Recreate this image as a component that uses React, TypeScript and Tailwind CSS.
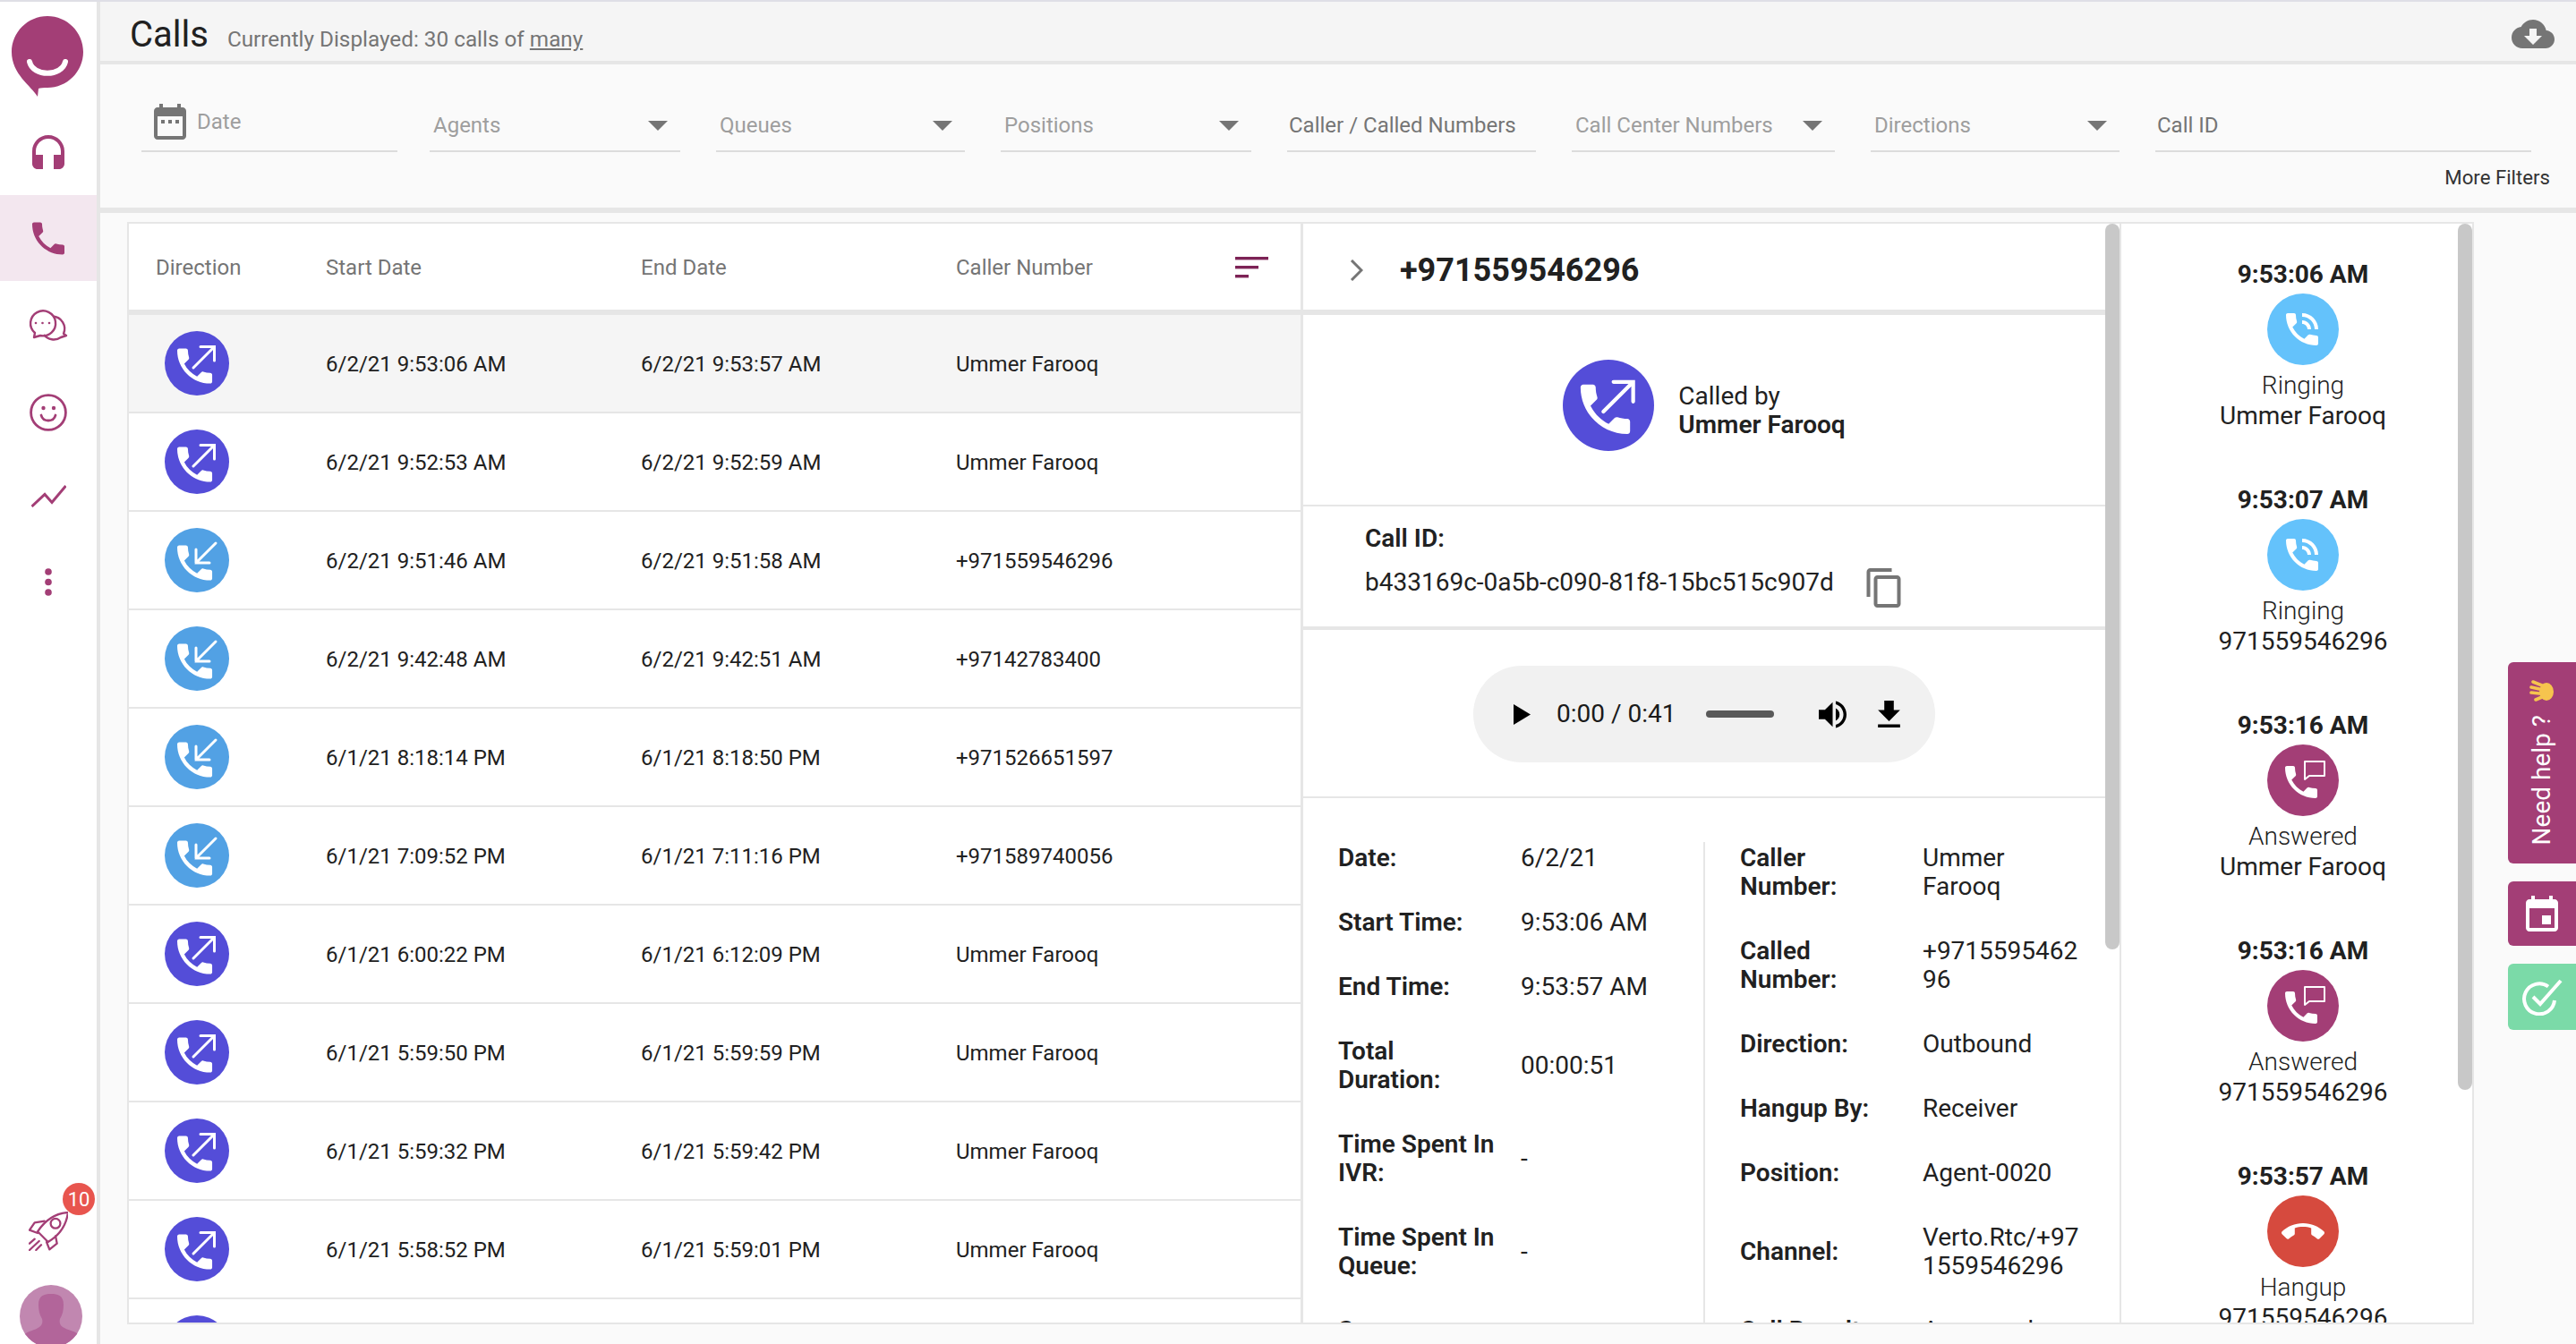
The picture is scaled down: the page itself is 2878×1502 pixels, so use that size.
import { Fragment } from "react";

const PHONE =
  "M6.62 10.79c1.44 2.83 3.76 5.14 6.59 6.59l2.2-2.2c.27-.27.67-.36 1.02-.24 1.12.37 2.33.57 3.57.57.55 0 1 .45 1 1V20c0 .55-.45 1-1 1-9.39 0-17-7.61-17-17 0-.55.45-1 1-1h3.5c.55 0 1 .45 1 1 0 1.25.2 2.45.57 3.57.11.35.03.74-.25 1.02l-2.2 2.2z";

const rows = [
  { out: true, start: "6/2/21 9:53:06 AM", end: "6/2/21 9:53:57 AM", caller: "Ummer Farooq" },
  { out: true, start: "6/2/21 9:52:53 AM", end: "6/2/21 9:52:59 AM", caller: "Ummer Farooq" },
  { out: false, start: "6/2/21 9:51:46 AM", end: "6/2/21 9:51:58 AM", caller: "+971559546296" },
  { out: false, start: "6/2/21 9:42:48 AM", end: "6/2/21 9:42:51 AM", caller: "+97142783400" },
  { out: false, start: "6/1/21 8:18:14 PM", end: "6/1/21 8:18:50 PM", caller: "+971526651597" },
  { out: false, start: "6/1/21 7:09:52 PM", end: "6/1/21 7:11:16 PM", caller: "+971589740056" },
  { out: true, start: "6/1/21 6:00:22 PM", end: "6/1/21 6:12:09 PM", caller: "Ummer Farooq" },
  { out: true, start: "6/1/21 5:59:50 PM", end: "6/1/21 5:59:59 PM", caller: "Ummer Farooq" },
  { out: true, start: "6/1/21 5:59:32 PM", end: "6/1/21 5:59:42 PM", caller: "Ummer Farooq" },
  { out: true, start: "6/1/21 5:58:52 PM", end: "6/1/21 5:59:01 PM", caller: "Ummer Farooq" },
  // only the top of this row's icon shows above the fold
  { out: true, start: "", end: "", caller: "" },
];

const leftInfo = [
  ["Date:", "6/2/21"],
  ["Start Time:", "9:53:06 AM"],
  ["End Time:", "9:53:57 AM"],
  ["Total Duration:", "00:00:51"],
  ["Time Spent In IVR:", "-"],
  ["Time Spent In Queue:", "-"],
  ["Source:", "-"],
];

const rightInfo = [
  ["Caller Number:", "Ummer Farooq"],
  ["Called Number:", "+971559546296"],
  ["Direction:", "Outbound"],
  ["Hangup By:", "Receiver"],
  ["Position:", "Agent-0020"],
  ["Channel:", "Verto.Rtc/+971559546296"],
  ["Call Result:", "Answered"],
];

const timeline = [
  { time: "9:53:06 AM", kind: "ring", label: "Ringing", who: "Ummer Farooq" },
  { time: "9:53:07 AM", kind: "ring", label: "Ringing", who: "971559546296" },
  { time: "9:53:16 AM", kind: "answer", label: "Answered", who: "Ummer Farooq" },
  { time: "9:53:16 AM", kind: "answer", label: "Answered", who: "971559546296" },
  { time: "9:53:57 AM", kind: "hangup", label: "Hangup", who: "971559546296" },
];

// circle with handset and direction arrow, drawn on a 72 unit box
function DirectionIcon({ out, size }: { out: boolean; size: string }) {
  return (
    <svg viewBox="0 0 72 72" className={`${size} shrink-0`}>
      <circle cx="36" cy="36" r="36" fill={out ? "#544dd8" : "#52a1e4"} />
      <path d={PHONE} fill="#fff" transform="translate(7.5 13) scale(2.17)" />
      {out ? (
        <path d="M32 41 L55 18 M40 17.5 H55.5 V33" fill="none" stroke="#fff" strokeWidth="3" strokeLinecap="round" />
      ) : (
        <path d="M57 17 L35 39 M35 24 V39 H50" fill="none" stroke="#fff" strokeWidth="3" strokeLinecap="round" />
      )}
    </svg>
  );
}

function TimelineIcon({ kind }: { kind: string }) {
  if (kind === "ring") {
    return (
      <svg viewBox="0 0 80 80" className="h-[80px] w-[80px]">
        <circle cx="40" cy="40" r="40" fill="#64c2fb" />
        <path
          transform="translate(15 16) scale(2)"
          fill="#fff"
          d="M20 15.5c-1.25 0-2.45-.2-3.57-.57-.35-.11-.74-.03-1.02.24l-2.2 2.2c-2.83-1.44-5.15-3.75-6.59-6.59l2.2-2.21c.28-.26.36-.65.25-1C8.7 6.45 8.5 5.25 8.5 4c0-.55-.45-1-1-1H4c-.55 0-1 .45-1 1 0 9.39 7.61 17 17 17 .55 0 1-.45 1-1v-3.5c0-.55-.45-1-1-1zM19 12h2c0-4.97-4.03-9-9-9v2c3.87 0 7 3.13 7 7zm-4 0h2c0-2.76-2.24-5-5-5v2c1.66 0 3 1.34 3 3z"
        />
      </svg>
    );
  }
  if (kind === "answer") {
    return (
      <svg viewBox="0 0 80 80" className="h-[80px] w-[80px]">
        <circle cx="40" cy="40" r="40" fill="#a33e76" />
        <path d={PHONE} fill="#fff" transform="translate(14 18) scale(2)" />
        <path d="M42 19 H64 V35 H47 L42 39 Z" fill="none" stroke="#fff" strokeWidth="2" strokeLinejoin="round" />
      </svg>
    );
  }
  return (
    <svg viewBox="0 0 80 80" className="h-[80px] w-[80px]">
      <circle cx="40" cy="40" r="40" fill="#d64a3e" />
      <path
        transform="translate(16 17) scale(2)"
        fill="#fff"
        d="M12 9c-1.6 0-3.15.25-4.6.72v3.1c0 .39-.23.74-.56.9-.98.49-1.87 1.12-2.66 1.85-.18.18-.43.28-.7.28-.28 0-.53-.11-.71-.29L.29 13.08c-.18-.17-.29-.42-.29-.7 0-.28.11-.53.29-.71C3.34 8.78 7.46 7 12 7s8.66 1.78 11.71 4.67c.18.18.29.43.29.71 0 .28-.11.53-.29.71l-2.48 2.48c-.18.18-.43.29-.71.29-.27 0-.52-.11-.7-.28-.79-.74-1.69-1.36-2.67-1.85-.33-.16-.56-.5-.56-.9v-3.1C15.15 9.25 13.6 9 12 9z"
      />
    </svg>
  );
}

function Sidebar() {
  return (
    <aside className="flex w-[112px] shrink-0 flex-col items-stretch border-r-4 border-[#e6e6e6] bg-white">
      <div className="flex h-[120px] shrink-0 justify-center pr-[2px] pt-[16px]">
        <svg viewBox="0 0 80 90" className="h-[90px] w-[80px]">
          <path
            fill="#a33e76"
            d="M40 0C62 0 80 18 80 40C80 62 62 80 40 80C36 80 32 80 30 81L29 90C22 78 0 65 0 40C0 18 18 0 40 0Z"
          />
          <path d="M20 51C24 68 56 68 60 51" fill="none" stroke="#fff" strokeWidth="6" strokeLinecap="round" />
        </svg>
      </div>
      <div className="flex h-[96px] items-center justify-center">
        <svg viewBox="3 1 18 19" className="h-[38px] w-[36px]" fill="#a33e76">
          <path d="M12 1c-4.97 0-9 4.03-9 9v7c0 1.66 1.34 3 3 3h3v-8H5v-2c0-3.87 3.13-7 7-7s7 3.13 7 7v2h-4v8h3c1.66 0 3-1.34 3-3v-7c0-4.97-4.03-9-9-9z" />
        </svg>
      </div>
      <div className="flex h-[96px] items-center justify-center bg-[#f3e7ef]">
        <svg viewBox="3 3 18 18" className="h-[37px] w-[36px]" fill="#a33e76">
          <path d={PHONE} />
        </svg>
      </div>
      <div className="flex h-[96px] items-center justify-center pt-[5px]">
        <svg viewBox="0 0 70 70" className="h-[70px] w-[70px]" fill="none" stroke="#a33e76" strokeWidth="2.4">
          <path d="M19 47L20 42A14 14 0 1 1 26 45Z" strokeLinejoin="round" />
          <path d="M40 23.5A14 14 0 0 1 52 43L55 45L49 47A14 14 0 0 1 30 44" strokeLinejoin="round" />
          <circle cx="21" cy="31" r="1.3" fill="#a33e76" stroke="none" />
          <circle cx="28.5" cy="31" r="1.3" fill="#a33e76" stroke="none" />
          <circle cx="36" cy="31" r="1.3" fill="#a33e76" stroke="none" />
        </svg>
      </div>
      <div className="flex h-[96px] items-center justify-center pt-[5px]">
        <svg viewBox="0 0 42 42" className="h-[42px] w-[42px]" fill="none" stroke="#a33e76" strokeWidth="2.8">
          <circle cx="21" cy="21" r="19.4" />
          <circle cx="15.5" cy="16" r="2.2" fill="#a33e76" stroke="none" />
          <circle cx="27" cy="16" r="2.2" fill="#a33e76" stroke="none" />
          <path d="M13 24C15 32 27 32 29 24" strokeLinecap="round" />
        </svg>
      </div>
      <div className="flex h-[96px] items-center justify-center">
        <svg viewBox="0 0 39 25" className="h-[25px] w-[39px]" fill="none" stroke="#a33e76" strokeWidth="3">
          <path d="M0.5 24L15 10.5L23 19.5L38.5 1" />
        </svg>
      </div>
      <div className="flex h-[96px] items-center justify-center">
        <svg viewBox="0 0 8 31" className="h-[31px] w-[8px]" fill="#a33e76">
          <circle cx="4" cy="4" r="3.8" />
          <circle cx="4" cy="15.5" r="3.8" />
          <circle cx="4" cy="27" r="3.8" />
        </svg>
      </div>
      <div className="relative mt-auto h-[44px] w-[44px] self-center">
        <svg viewBox="0 0 44 44" className="h-[44px] w-[44px]" fill="none" stroke="#a33e76" strokeWidth="2.3" strokeLinejoin="round" strokeLinecap="round">
          <path d="M44 1C28 2 17.7 10.7 10 22.3L21.7 34C33.3 27.3 42 16 44 1Z" />
          <path d="M17.7 10.7L6.7 12.3L1 20.7L10 24" />
          <path d="M30 27.3L31.7 35.7L23.3 42.3L20 34" />
          <circle cx="30" cy="13.3" r="5.4" />
          <path d="M1 35.7L6.7 30.7M1 43L11.7 33M8.3 43L14 37.3" />
        </svg>
        <span className="absolute left-[38px] top-[-32px] flex h-[36px] w-[36px] items-center justify-center rounded-full bg-[#e8554e] text-[22px] text-white">
          10
        </span>
      </div>
      <div className="mb-[-4px] ml-[22px] mt-[38px] h-[70px] w-[70px] self-start overflow-hidden rounded-full bg-[#c187b0]">
        <svg viewBox="0 0 70 70" className="h-[70px] w-[70px]" fill="#b2659a">
          <path d="M21 22C21 12 27 10 35 10C43 10 49 12 49 22C49 28 48 33 45 38C44 42 45 45 48 47C54 51 62 51 66 56C60 64 48 70 35 70C22 70 10 64 5 56C9 51 17 51 22 47C25 45 26 42 25 38C22 33 21 28 21 22Z" />
        </svg>
      </div>
    </aside>
  );
}

function FilterField({
  label,
  width,
  select,
  filled,
}: {
  label: string;
  width: string;
  select?: boolean;
  filled?: boolean;
}) {
  return (
    <div className={`${width} flex h-[64px] shrink-0 items-end justify-between border-b-2 border-[#dcdcdc] pb-[12px] pr-[14px] ${filled ? "pl-[2px]" : "pl-[4px]"}`}>
      <span className={`text-[24px] leading-[32px] ${filled ? "text-[#757575]" : "text-[#9e9e9e]"}`}>{label}</span>
      {select && (
        <svg viewBox="0 0 22 11" className="mb-[10px] h-[11px] w-[22px]" fill="#757575">
          <path d="M0 0H22L11 11Z" />
        </svg>
      )}
    </div>
  );
}

function Filters() {
  return (
    <section className="h-[166px] shrink-0 border-b-[6px] border-[#e6e6e6] bg-[#fafafa] pr-[29px] pt-[34px]">
      <div className="flex gap-[40px] pl-[46px]">
        <div className="mr-[-4px] flex h-[64px] w-[286px] shrink-0 items-end gap-[12px] border-b-2 border-[#dcdcdc] pb-[12px] pl-[14px]">
          <svg viewBox="3 2 18 20" className="h-[40px] w-[36px]" fill="#757575">
            <path d="M9 11H7v2h2v-2zm4 0h-2v2h2v-2zm4 0h-2v2h2v-2zm2-7h-1V2h-2v2H8V2H6v2H5c-1.11 0-1.99.9-1.99 2L3 20c0 1.1.89 2 2 2h14c1.1 0 2-.9 2-2V6c0-1.1-.9-2-2-2zm0 16H5V9h14v11z" />
          </svg>
          <span className="pb-[4px] text-[24px] leading-[32px] text-[#9e9e9e]">Date</span>
        </div>
        <FilterField label="Agents" width="w-[280px]" select />
        <FilterField label="Queues" width="w-[278px]" select />
        <FilterField label="Positions" width="w-[280px]" select />
        <FilterField label="Caller / Called Numbers" width="w-[278px]" filled />
        <FilterField label="Call Center Numbers" width="w-[294px]" select />
        <FilterField label="Directions" width="w-[278px]" select />
        <FilterField label="Call ID" width="w-[420px]" filled />
      </div>
      <div className="mt-[15px] flex justify-end text-[22.2px] leading-[26px] text-[#333]">More Filters</div>
    </section>
  );
}

function CallsTable() {
  return (
    <div className="h-full w-[1312px] shrink-0 overflow-hidden border-r-[3px] border-[#e6e6e6]">
      <div className="flex h-[102px] items-center border-b-[6px] border-[#e6e6e6] pt-[1px] text-[24px] text-[#757575]">
        <div className="w-[220px] pl-[30px]">Direction</div>
        <div className="w-[352px]">Start Date</div>
        <div className="w-[352px]">End Date</div>
        <div className="flex flex-1 items-center justify-between pr-[36px]">
          <span>Caller Number</span>
          <svg viewBox="0 0 37 24" className="h-[24px] w-[37px]" fill="#7d2356">
            <rect x="0" y="0" width="37" height="3.4" />
            <rect x="0" y="10" width="26" height="3.4" />
            <rect x="0" y="20" width="15" height="3.4" />
          </svg>
        </div>
      </div>
      {rows.map((r, i) => (
        <div
          key={i}
          className={`flex h-[110px] items-center border-b-2 border-[#e6e6e6] text-[24px] text-[#212121] ${i === 0 ? "bg-[#f5f5f5]" : ""}`}
        >
          <div className="w-[220px] pl-[40px]">
            <DirectionIcon out={r.out} size="h-[72px] w-[72px]" />
          </div>
          <div className="w-[352px] pt-[1px]">{r.start}</div>
          <div className="w-[352px] pt-[1px]">{r.end}</div>
          <div className="flex-1 pt-[1px]">{r.caller}</div>
        </div>
      ))}
    </div>
  );
}

function InfoRow({ label, value }: { label: string; value: string }) {
  return (
    <div className="flex items-center">
      <div className="mr-[28px] w-[176px] shrink-0 font-semibold text-[#212121]">{label}</div>
      <div className="w-[178px] break-all text-[#212121]">
        {value === "Ummer Farooq" ? (
          <Fragment>
            Ummer
            <br />
            Farooq
          </Fragment>
        ) : (
          value
        )}
      </div>
    </div>
  );
}

function Detail() {
  return (
    <div className="flex h-full w-[914px] shrink-0 border-r-2 border-[#e6e6e6]">
      <div className="h-full w-[896px] shrink-0 overflow-hidden">
        <div className="flex h-[102px] items-center border-b-[6px] border-[#e6e6e6] pl-[52px] pt-[8px]">
          <svg viewBox="0 0 15 24" className="h-[24px] w-[15px]" fill="none" stroke="#757575" strokeWidth="3">
            <path d="M2 1L13 12L2 23" />
          </svg>
          <span className="ml-[41px] text-[36px] font-bold leading-[44px] text-[#212121]">+971559546296</span>
        </div>
        <div className="flex h-[214px] items-start justify-center gap-[27px] border-b-2 border-[#e6e6e6] pt-[50px]">
          <DirectionIcon out size="h-[102px] w-[102px]" />
          <div className="mt-[25px] text-[28px] leading-[32px] text-[#212121]">
            <div>Called by</div>
            <div className="font-semibold">Ummer Farooq</div>
          </div>
        </div>
        <div className="h-[138px] border-b-4 border-[#e6e6e6] pl-[69px] pt-[20px] text-[28px] leading-[32px] text-[#212121]">
          <div className="font-semibold">Call ID:</div>
          <div className="mt-[17px] flex items-start gap-[36px]">
            <span>b433169c-0a5b-c090-81f8-15bc515c907d</span>
            <svg viewBox="2 1 19 22" className="h-[44px] w-[39px]" fill="#757575">
              <path d="M16 1H4c-1.1 0-2 .9-2 2v14h2V3h12V1zm3 4H8c-1.1 0-2 .9-2 2v14c0 1.1.9 2 2 2h11c1.1 0 2-.9 2-2V7c0-1.1-.9-2-2-2zm0 16H8V7h11v14z" />
            </svg>
          </div>
        </div>
        <div className="flex h-[188px] justify-center border-b-2 border-[#e6e6e6] pt-[40px]">
          <div className="flex h-[108px] w-[516px] items-center rounded-full bg-[#f1f1f1] pl-[45px]">
            <svg viewBox="0 0 19 23" className="h-[23px] w-[19px]" fill="#000">
              <path d="M0 0L19 11.5L0 23Z" />
            </svg>
            <span className="ml-[29px] text-[28px] text-[#1a1a1a]">0:00 / 0:41</span>
            <div className="ml-[34px] h-[8px] w-[76px] rounded-full bg-[#595959]" />
            <svg viewBox="3 3 18 18" className="ml-[50px] h-[31px] w-[31px]" fill="#000">
              <path d="M3 9v6h4l5 5V4L7 9H3zm13.5 3c0-1.77-1.02-3.29-2.5-4.03v8.05c1.48-.73 2.5-2.25 2.5-4.02zM14 3.23v2.06c2.89.86 5 3.54 5 6.71s-2.11 5.85-5 6.71v2.06c4.01-.91 7-4.49 7-8.77s-2.99-7.86-7-8.77z" />
            </svg>
            <svg viewBox="5 3 14 17" className="ml-[35px] h-[30px] w-[25px]" fill="#000">
              <path d="M19 9h-4V3H9v6H5l7 7 7-7zM5 18v2h14v-2H5z" />
            </svg>
          </div>
        </div>
        <div className="flex pt-[49px] text-[28px] leading-[32px]">
          <div className="flex w-[447px] shrink-0 flex-col gap-[40px] pl-[39px] pt-[2px]">
            {leftInfo.map(([label, value]) => (
              <InfoRow key={label} label={label} value={value} />
            ))}
          </div>
          <div className="flex flex-1 flex-col gap-[40px] border-l-2 border-[#e6e6e6] pl-[39px] pt-[2px]">
            {rightInfo.map(([label, value]) => (
              <InfoRow key={label} label={label} value={value} />
            ))}
          </div>
        </div>
      </div>
      <div className="h-[811px] w-[16px] rounded-[8px] bg-[#c8c8c8]" />
    </div>
  );
}

function Timeline() {
  return (
    <div className="relative h-full flex-1 overflow-hidden">
      <div className="flex flex-col items-center pl-[14px] pt-[40px] text-center text-[28px] leading-[33px] text-[#212121]">
        {timeline.map((t, i) => (
          <div key={i} className="mb-[61px] flex flex-col items-center">
            <div className="mb-[5px] font-bold">{t.time}</div>
            <TimelineIcon kind={t.kind} />
            <div className="mt-[6px] font-light">{t.label}</div>
            <div className="mt-[1px]">{t.who}</div>
          </div>
        ))}
      </div>
      <div className="absolute right-0 top-0 h-[968px] w-[16px] rounded-[8px] bg-[#c8c8c8]" />
    </div>
  );
}

function SideTabs() {
  return (
    <div className="mt-[492px] flex w-[76px] shrink-0 flex-col gap-[20px] text-white">
      <div className="flex h-[225px] flex-col items-center justify-between rounded-l-[6px] bg-[#a33e76] pb-[21px] pt-[19px]">
        <svg viewBox="0 0 28 28" className="h-[28px] w-[28px]" fill="none" stroke="#f6c44e" strokeWidth="3.6" strokeLinecap="round">
          <path d="M14 7L4 3M11 11L2 9M11 16L2 15M14 20L7 23" />
          <ellipse cx="19" cy="14" rx="8" ry="10" fill="#f6c44e" stroke="none" />
        </svg>
        <span className="rotate-180 text-[28px] leading-[34px] [writing-mode:vertical-rl]">Need help ?</span>
      </div>
      <div className="flex h-[72px] items-center justify-center rounded-l-[6px] bg-[#a33e76]">
        <svg viewBox="3 1 18 20" className="h-[40px] w-[36px]" fill="#fff">
          <path d="M17 12h-5v5h5v-5zM16 1v2H8V1H6v2H5c-1.11 0-1.99.9-1.99 2L3 19c0 1.1.89 2 2 2h14c1.1 0 2-.9 2-2V5c0-1.1-.9-2-2-2h-1V1h-2zm3 18H5V8h14v11z" />
        </svg>
      </div>
      <div className="flex h-[74px] items-center justify-center rounded-l-[6px] bg-[#7bdaa8]">
        <svg viewBox="0 0 46 42" className="h-[42px] w-[46px]" fill="none" stroke="#fff" strokeWidth="4">
          <path d="M30 9.5A17 17 0 1 0 37 25" />
          <path d="M13 21L21 29L44 3" />
        </svg>
      </div>
    </div>
  );
}

export default function App() {
  return (
    <div className="flex h-[1502px] w-full overflow-hidden border-t-2 border-[#dfdfe6] bg-[#fafafa] font-[Roboto,sans-serif]">
      <Sidebar />
      <main className="flex min-w-0 flex-1 flex-col">
        <header className="flex h-[70px] shrink-0 items-baseline border-b-4 border-[#e6e6e6] bg-[#f5f5f5] pl-[33px] pr-[24px] pt-[13px]">
          <h1 className="text-[40px] leading-[48px] text-[#212121]">Calls</h1>
          <span className="ml-[21px] text-[24.3px] text-[#757575]">
            Currently Displayed: 30 calls of <span className="underline">many</span>
          </span>
          <svg viewBox="0 4 24 16" className="ml-auto mt-[7px] h-[32px] w-[48px] self-start" fill="#757575">
            <path d="M19.35 10.04C18.67 6.59 15.64 4 12 4 9.11 4 6.6 5.64 5.35 8.04 2.34 8.36 0 10.91 0 14c0 3.31 2.69 6 6 6h13c2.76 0 5-2.24 5-5 0-2.64-2.05-4.78-4.65-4.96zM17 13l-5 5-5-5h3V9h4v4h3z" />
          </svg>
        </header>
        <Filters />
        <div className="flex flex-1 items-start pl-[30px] pt-[10px]">
          <div className="flex h-[1232px] w-[2622px] shrink-0 border-2 border-[#e6e6e6] bg-white">
            <CallsTable />
            <Detail />
            <Timeline />
          </div>
          <div className="ml-auto">
            <SideTabs />
          </div>
        </div>
      </main>
    </div>
  );
}
